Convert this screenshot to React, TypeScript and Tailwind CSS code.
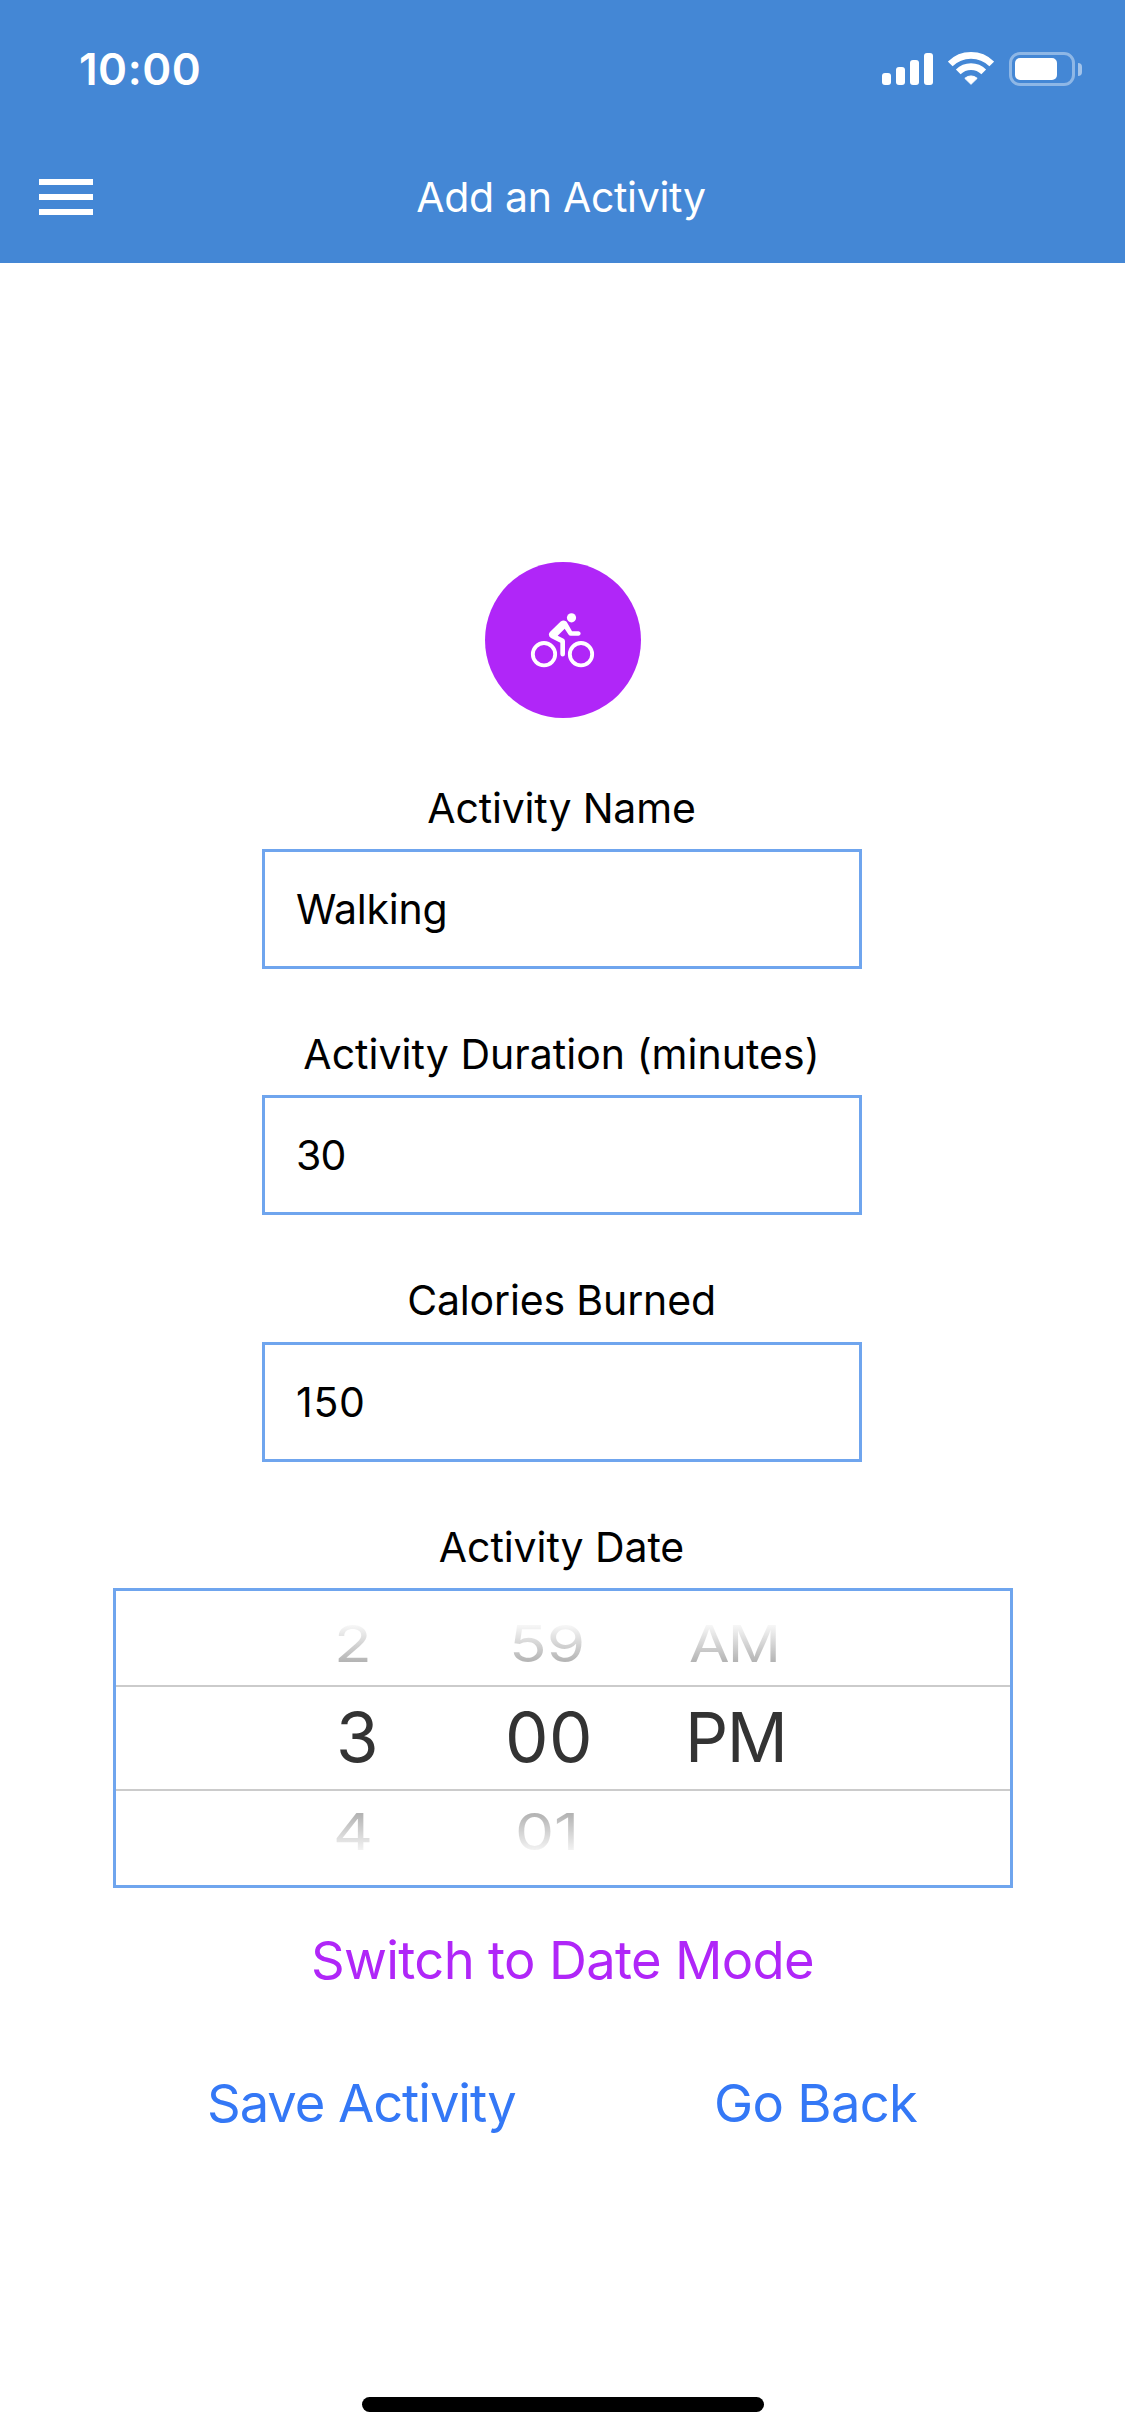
import React from "react";

function SignalBars() {
  return (
    <div className="flex h-[33px] items-end gap-[5px]">
      <span className="h-[12px] w-[9px] rounded-[3px] bg-white" />
      <span className="h-[18px] w-[9px] rounded-[3px] bg-white" />
      <span className="h-[25px] w-[9px] rounded-[3px] bg-white" />
      <span className="h-[32px] w-[9px] rounded-[3px] bg-white" />
    </div>
  );
}

function WifiIcon() {
  return (
    <svg className="h-[34px] w-[46px]" viewBox="294 96 138 102" fill="none">
      <path d="M300.8 131.8A88 88 0 0 1 425.2 131.8" stroke="white" strokeWidth="20" />
      <path d="M324.8 155.8A54 54 0 0 1 401.2 155.8" stroke="white" strokeWidth="20" />
      <path
        d="M363 193L344.5 175A27.5 27.5 0 0 1 381.5 175Z"
        fill="white"
        stroke="white"
        strokeWidth="3"
        strokeLinejoin="round"
      />
    </svg>
  );
}

function BatteryIcon() {
  return (
    <div className="flex items-center gap-[3px]">
      <div className="h-[34px] w-[66px] rounded-[11px] border-[3px] border-white/40 p-[3px]">
        <div className="h-[22px] w-[42px] rounded-[5px] bg-white" />
      </div>
      <div className="h-[13px] w-[4px] rounded-r-full bg-white/50" />
    </div>
  );
}

function BikeIcon() {
  return (
    <svg className="mr-[2px] h-[57px] w-[65px]" viewBox="165 185 195 171" fill="none">
      <circle cx="207" cy="311.5" r="33.5" stroke="white" strokeWidth="11.5" />
      <circle cx="318" cy="311.5" r="33.5" stroke="white" strokeWidth="11.5" />
      <circle cx="289.5" cy="202.5" r="13.8" fill="white" />
      <path
        fill="white"
        d="M257 213.500Q265.500 207.500 273 213Q275.500 215 277.500 219L291 243H310.500Q317 243.500 317 249.500Q317 256 310.500 256H287Q283 256 281 253L269 235.500L248 256.500L266 265.500Q270 268 270 273V311.500Q269.500 318.500 263 318.500Q256.500 318.500 256 311.500V277.500L228 263Q221.500 259 221.500 252.500Q222 247.500 225.500 244Z"
      />
    </svg>
  );
}

function StatusBar() {
  return (
    <div className="flex h-[132px] items-start justify-between pl-[79px] pr-[43px]">
      <span className="pt-[42px] text-[44px] leading-[54px] font-semibold tracking-[0.5px]">10:00</span>
      <div className="flex items-start pt-[52px]">
        <SignalBars />
        <div className="ml-[15px]">
          <WifiIcon />
        </div>
        <div className="ml-[15px]">
          <BatteryIcon />
        </div>
      </div>
    </div>
  );
}

function NavBar() {
  return (
    <div className="grid h-[131px] grid-cols-[1fr_auto_1fr] items-center pl-[39px] pr-[42px] pb-px">
      <button className="flex w-[54px] flex-col gap-[9px]" aria-label="Menu">
        <span className="h-[6px] w-full bg-white" />
        <span className="h-[6px] w-full bg-white" />
        <span className="h-[6px] w-full bg-white" />
      </button>
      <h1 className="text-[41px] leading-[50px] font-normal tracking-[-0.32px]">Add an Activity</h1>
    </div>
  );
}

function Label({ children, className }: { children: React.ReactNode; className: string }) {
  return <label className={`mr-[2px] text-[41px] leading-[50px] ${className}`}>{children}</label>;
}

function TextBox({ value, className }: { value: string; className: string }) {
  return (
    <input
      className={`mr-px h-[120px] w-[600px] border-[3px] border-[#6fa5ee] bg-white pl-[31px] text-[41px] outline-none ${className}`}
      defaultValue={value}
    />
  );
}

const upper =
  "scale-y-[0.82] bg-[linear-gradient(to_bottom,#f6f6f6_14%,#b3b3b3_86%)] bg-clip-text text-transparent";
const lower =
  "scale-y-[0.82] bg-[linear-gradient(to_bottom,#b3b3b3_14%,#f6f6f6_90%)] bg-clip-text text-transparent";

function TimePicker() {
  return (
    <div className="mt-[16px] ml-px h-[300px] w-[900px] border-[3px] border-[#6fa5ee] text-[62px] leading-[62px]">
      <div className="grid h-[94px] grid-cols-[170px_180px_1fr] items-center justify-items-start pt-[11px] pl-[214px]">
        <span className={`ml-[4px] ${upper}`}>2</span>
        <span className={`ml-[9px] ${upper}`}>59</span>
        <span className={`ml-[9px] origin-left scale-x-[0.95] tracking-[-2px] ${upper}`}>AM</span>
      </div>
      <div className="grid h-[106px] grid-cols-[170px_180px_1fr] items-center justify-items-start border-y-2 border-[#cbcbcb] pb-[2px] pl-[214px] text-[69px] leading-[80px] text-[#333333]">
        <span className="ml-[6px]">3</span>
        <span className="ml-[5px] tracking-[0.5px]">00</span>
        <span className="ml-[5px] origin-left scale-x-[0.98] tracking-[-1.5px]">PM</span>
      </div>
      <div className="grid h-[94px] grid-cols-[170px_180px_1fr] items-center justify-items-start pb-[13px] pl-[214px]">
        <span className={`ml-[3px] ${lower}`}>4</span>
        <span className={`ml-[15px] ${lower}`}>01</span>
      </div>
    </div>
  );
}

export default function App() {
  return (
    <div className="flex h-[2436px] w-[1125px] flex-col overflow-hidden bg-white font-['Inter',sans-serif] text-black">
      <header className="bg-[#4487d5] text-white">
        <StatusBar />
        <NavBar />
      </header>

      <main className="flex flex-col items-center pt-[299px]">
        <div className="ml-px flex size-[156px] items-center justify-center rounded-full bg-[#b026f8]">
          <BikeIcon />
        </div>

        <Label className="mt-[65px] tracking-[-0.16px]">Activity Name</Label>
        <TextBox className="mt-[16px] tracking-[-0.24px]" value="Walking" />

        <Label className="mt-[60px] tracking-[0.03px]">Activity Duration (minutes)</Label>
        <TextBox className="mt-[16px] tracking-[-0.8px]" value="30" />

        <Label className="mt-[60px] tracking-[-0.15px]">Calories Burned</Label>
        <TextBox className="mt-[17px] tracking-[0.7px]" value="150" />

        <Label className="mt-[60px] tracking-[-0.08px]">Activity Date</Label>
        <TimePicker />

        <button className="mt-[40px] text-[52.5px] leading-[64px] tracking-[-0.68px] text-[#b026f8]">
          Switch to Date Mode
        </button>
        <div className="mt-[79px] grid w-full grid-cols-[507px_auto] justify-items-start pl-[207px] text-[52.5px] leading-[64px] text-[#3478f6]">
          <button className="tracking-[-1.05px]">Save Activity</button>
          <button className="tracking-[-0.7px]">Go Back</button>
        </div>
      </main>

      <div className="mt-auto mb-[24px] ml-px h-[15px] w-[402px] self-center rounded-full bg-black" />
    </div>
  );
}
